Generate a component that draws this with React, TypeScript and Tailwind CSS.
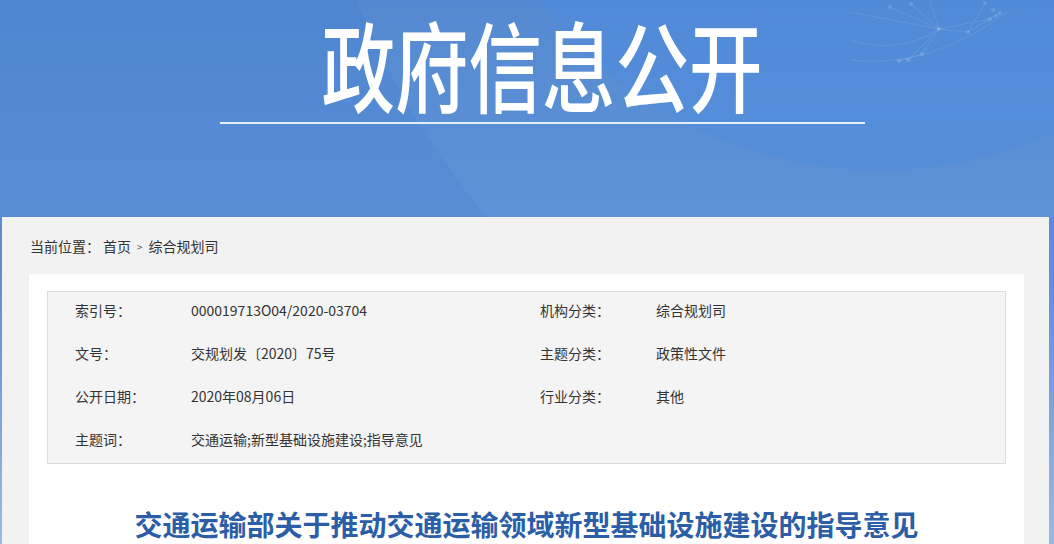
import { FC } from 'react';

const rows: [string, string, string, string][] = [
    ['索引号：', '000019713O04/2020-03704', '机构分类：', '综合规划司'],
    ['文号：', '交规划发〔2020〕75号', '主题分类：', '政策性文件'],
    ['公开日期：', '2020年08月06日', '行业分类：', '其他'],
    ['主题词：', '交通运输;新型基础设施建设;指导意见', '', ''],
];

// faint network decoration in the header's top-right corner
const NetworkArt: FC = () => {
    const dots: [number, number][] = [
        [890, 7], [911, 4], [939, 29], [968, 32], [922, 54], [899, 61], [908, 60], [985, 3], [993, 10], [990, 19], [996, 16], [1000, 13],
    ];
    return (
        <svg className="absolute left-0 top-0 h-[217px] w-[1054px] pointer-events-none" viewBox="0 0 1054 217">
            <g stroke="#ffffff" strokeOpacity="0.1" strokeWidth="1" fill="none">
                <path d="M850 12 L939 29 L968 32" />
                <path d="M890 7 L939 29 L922 54 L899 61" />
                <path d="M911 4 L939 29 L990 19" />
                <path d="M939 29 L908 60" />
                <path d="M985 3 L968 32 L1000 13" />
                <path d="M850 60 Q 930 70 1010 10" />
                <path d="M850 40 Q 900 55 939 29" />
                <path d="M930 0 L939 29" />
            </g>
            <g fill="#ffffff" fillOpacity="0.15">
                {dots.map(([x, y], i) => (
                    <circle key={i} cx={x} cy={y} r={2} />
                ))}
            </g>
        </svg>
    );
};

const App: FC = () => {
    return (
        <div
            className="relative w-[1054px] h-[544px] overflow-hidden bg-gradient-to-b from-[#4f86d1] via-[#5b90d6] to-[#98b9e5]"
            style={{ fontFamily: '"Noto Sans CJK SC", "Noto Sans", sans-serif' }}
        >
            {/* Header */}
            <div className="relative h-[217px] overflow-hidden">
                {/* big soft arc from the left-middle */}
                <div className="absolute left-[298px] top-[-1102px] h-[1604px] w-[1604px] rounded-full bg-white/[0.04]" />
                {/* globe on the right */}
                <div className="absolute left-[450px] top-[-690px] h-[860px] w-[860px] rounded-full bg-[#4a8ce6]/30" />
                <NetworkArt />

                <div className="relative flex flex-col items-center pl-[30px]">
                    <div className="mt-[8px] flex h-[108px] w-[620px] justify-center">
                        <h1 className="shrink-0 text-[98px] leading-[108px] font-medium text-white scale-x-[0.75] whitespace-nowrap">
                            政府信息公开
                        </h1>
                    </div>
                    <div className="mt-[6px] h-[2px] w-[645px] bg-[#e6eefb]" />
                </div>
            </div>

            {/* Content */}
            <div className="ml-[2px] w-[1047px] h-[327px] bg-[#f2f2f2]">
                <div className="flex items-center h-[57px] pl-[28px] text-[14px] text-[#333333] pt-[1px]">
                    <span>当前位置：</span>
                    <span className="ml-[3px]">首页</span>
                    <span className="mx-[6px] text-[10px] text-[#555555]">&gt;</span>
                    <span>综合规划司</span>
                </div>

                <div className="ml-[27px] w-[995px] h-[270px] bg-white pt-[17px]">
                    <div className="ml-[18px] w-[959px] h-[173px] border border-[#dcdcdc] bg-[#f4f4f4] pl-[27px] text-[14px] text-[#333333]">
                        {rows.map(([l1, v1, l2, v2], i) => (
                            <div key={i} className="grid grid-cols-[116px_349px_116px_1fr] items-center h-[43px] mt-[-2px] first:mt-[-3px] mb-[2px]">
                                <span>{l1}</span>
                                <span className="whitespace-nowrap">{v1}</span>
                                <span>{l2}</span>
                                <span>{v2}</span>
                            </div>
                        ))}
                    </div>

                    <h2 className="mt-[42px] text-center text-[28px] leading-[36px] font-bold text-[#2b5ea6] whitespace-nowrap">
                        交通运输部关于推动交通运输领域新型基础设施建设的指导意见
                    </h2>
                </div>
            </div>
        </div>
    );
};

export default App;
